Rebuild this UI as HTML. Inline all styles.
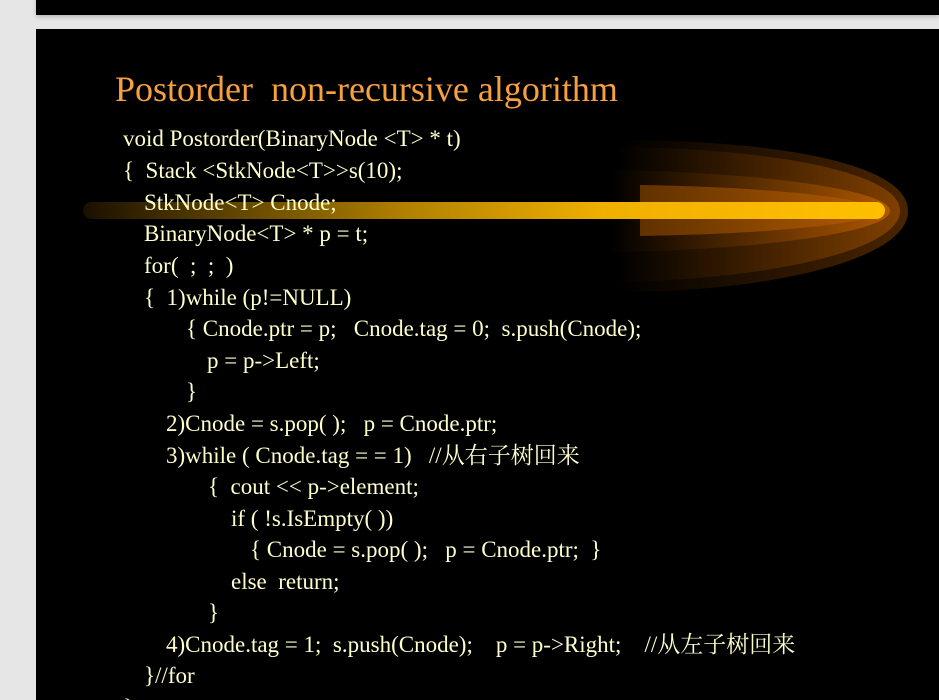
<!DOCTYPE html>
<html><head><meta charset="utf-8"><style>
html,body{margin:0;padding:0;width:939px;height:700px;overflow:hidden;background:#e6e6e6;position:relative}
.s1{position:absolute;left:36px;top:-10px;width:903px;height:25px;background:#000;box-shadow:0 2px 4px rgba(0,0,0,.2)}
.s2{position:absolute;left:36px;top:29px;width:903px;height:700px;background:#000}
.t{position:absolute;left:115px;top:67px;font:36px "Liberation Serif",serif;color:#f7a040;white-space:pre;line-height:44px}
.l{position:absolute;font:23px "Liberation Serif","Noto Serif CJK SC",serif;color:#ffffcc;white-space:pre;line-height:26px;margin-top:1px}
svg{position:absolute;left:0;top:0}
</style></head><body>
<div class="s1"></div>
<div class="s2"></div>
<svg width="939" height="700">
<defs>
<linearGradient id="g" x1="0" x2="1"><stop offset="0" stop-color="#000"/><stop offset="1" stop-color="#b85c00"/></linearGradient>
<linearGradient id="b" x1="0" x2="1"><stop offset="0" stop-color="#1a1000"/><stop offset="0.4" stop-color="#b08000"/><stop offset="0.65" stop-color="#f0b000"/><stop offset="1" stop-color="#ffbf00"/></linearGradient>
</defs>
<path d="M619 140 C760 140 908 160 908 211 C908 262 760 292 619 292 Z" fill="url(#g)" opacity="0.4"/>
<path d="M616 147 C760 148 900 170 900 211 C900 252 760 280 616 282 Z" fill="url(#g)" opacity="0.5"/>
<path d="M610 170 C760 172 890 190 890 211 C890 232 760 250 610 252 Z" fill="url(#g)" opacity="0.85"/>
<path d="M640 185 C780 187 880 200 880 211 C880 222 780 234 640 236 Z" fill="#c06400" opacity="0.45"/>
<rect x="83" y="202" width="802" height="17" rx="8.5" fill="url(#b)"/>
</svg>
<div class="t">Postorder  non-recursive algorithm</div>
<div class="l" style="left:123px;top:125px">void Postorder(BinaryNode &lt;T&gt; * t)</div>
<div class="l" style="left:123px;top:157px">{  Stack &lt;StkNode&lt;T&gt;&gt;s(10);</div>
<div class="l" style="left:144px;top:189px">StkNode&lt;T&gt; Cnode;</div>
<div class="l" style="left:144px;top:220px">BinaryNode&lt;T&gt; * p = t;</div>
<div class="l" style="left:144px;top:252px">for(  ;  ;  )</div>
<div class="l" style="left:144px;top:284px">{  1)while (p!=NULL)</div>
<div class="l" style="left:186px;top:315px">{ Cnode.ptr = p;   Cnode.tag = 0;  s.push(Cnode);</div>
<div class="l" style="left:207px;top:347px">p = p-&gt;Left;</div>
<div class="l" style="left:186px;top:378px">}</div>
<div class="l" style="left:166px;top:410px">2)Cnode = s.pop( );   p = Cnode.ptr;</div>
<div class="l" style="left:166px;top:442px">3)while ( Cnode.tag = = 1)   //从右子树回来</div>
<div class="l" style="left:208px;top:473px">{  cout &lt;&lt; p-&gt;element;</div>
<div class="l" style="left:231px;top:505px">if ( !s.IsEmpty( ))</div>
<div class="l" style="left:250px;top:536px">{ Cnode = s.pop( );   p = Cnode.ptr;  }</div>
<div class="l" style="left:231px;top:568px">else  return;</div>
<div class="l" style="left:208px;top:599px">}</div>
<div class="l" style="left:166px;top:631px">4)Cnode.tag = 1;  s.push(Cnode);    p = p-&gt;Right;    //从左子树回来</div>
<div class="l" style="left:144px;top:662px">}//for</div>
<div class="l" style="left:123px;top:694px">}</div>
</body></html>
